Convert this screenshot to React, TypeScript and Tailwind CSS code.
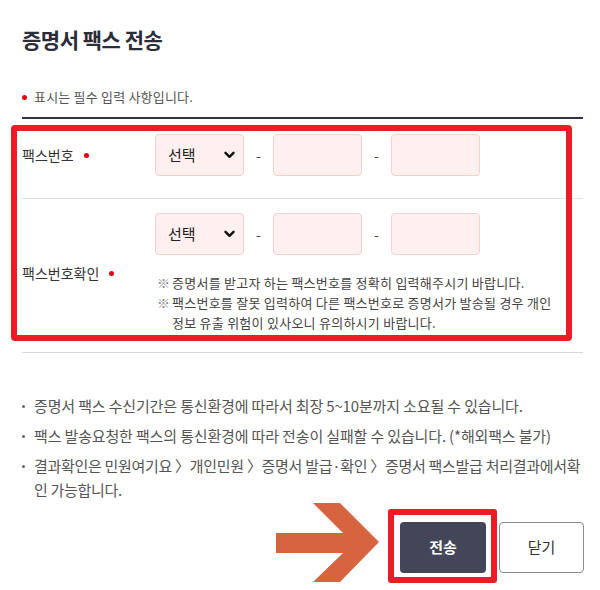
import React from "react";

function Chevron() {
  return (
    <svg width="11" height="8" viewBox="0 0 11 8" className="shrink-0">
      <path d="M1.5 1.8 L5.5 5.8 L9.5 1.8" fill="none" stroke="#111" strokeWidth="2.4" strokeLinecap="round" strokeLinejoin="round" />
    </svg>
  );
}

function SelectBox() {
  return (
    <div className="w-[89px] h-[42px] rounded-[4px] border border-[#f8cfcf] bg-[#fff0f0] flex items-center justify-between pl-[12px] pr-[8px]">
      <span className="text-[15px] text-[#222]">선택</span>
      <Chevron />
    </div>
  );
}

function InputBox() {
  return <div className="w-[89px] h-[42px] rounded-[4px] border border-[#f8cfcf] bg-[#fff0f0]" />;
}

function Dash() {
  return <div className="w-[29px] text-center text-[14px] text-[#444]">-</div>;
}

function PhoneRow() {
  return (
    <div className="flex items-center">
      <SelectBox />
      <Dash />
      <InputBox />
      <Dash />
      <InputBox />
    </div>
  );
}

function RedDot() {
  return <span className="inline-block w-[5px] h-[5px] rounded-full bg-[#e60012]" />;
}

function Bullet() {
  return (
    <span className="w-[12px] shrink-0 flex pt-[11px]">
      <span className="w-[3px] h-[3px] rounded-full bg-[#666]" />
    </span>
  );
}

export default function App() {
  return (
    <div className="relative w-[600px] h-[590px] bg-white overflow-hidden font-['Noto_Sans_CJK_KR','Noto_Sans',sans-serif] text-[#333]">
      <div className="ml-[22px] w-[561px]">
        <h1 className="pt-[23px] h-[55px] leading-[32px] text-[21px] font-bold text-[#2b2d38] tracking-[-0.5px]">
          증명서 팩스 전송
        </h1>
        <div className="mt-[32px] h-[20px] flex items-center text-[13px] leading-[20px] text-[#555] tracking-[0.2px]">
          <RedDot />
          <span className="ml-[7px]">표시는 필수 입력 사항입니다.</span>
        </div>
        <div className="mt-[10px] border-t-2 border-[#2f3346]">
          <div className="flex border-b border-[#e4e4e4] pt-[15px] pb-[22px]">
            <div className="w-[133px] flex items-center text-[14px] text-[#333]">
              <span>팩스번호</span>
              <span className="ml-[10px] flex"><RedDot /></span>
            </div>
            <PhoneRow />
          </div>
          <div className="flex border-b border-[#d9d9d9] pt-[14px] pb-[19px]">
            <div className="w-[133px] flex items-center text-[14px] text-[#333]">
              <span>팩스번호확인</span>
              <span className="ml-[10px] flex"><RedDot /></span>
            </div>
            <div className="flex flex-col">
              <PhoneRow />
              <div className="mt-[18px] text-[13px] leading-[20px] text-[#444] tracking-[0.25px]">
                <div className="flex">
                  <span className="w-[15px] shrink-0 ml-[2px] text-[#888]">※</span>
                  <span>증명서를 받고자 하는 팩스번호를 정확히 입력해주시기 바랍니다.</span>
                </div>
                <div className="flex">
                  <span className="w-[15px] shrink-0 ml-[2px] text-[#888]">※</span>
                  <span className="w-[390px]">팩스번호를 잘못 입력하여 다른 팩스번호로 증명서가 발송될 경우 개인 정보 유출 위험이 있사오니 유의하시기 바랍니다.</span>
                </div>
              </div>
            </div>
          </div>
        </div>
        <ul className="mt-[41px] flex flex-col gap-[6px] text-[15px] leading-[24px] text-[#555] tracking-[-0.15px]">
          <li className="flex">
            <Bullet />
            <span>증명서 팩스 수신기간은 통신환경에 따라서 최장 5~10분까지 소요될 수 있습니다.</span>
          </li>
          <li className="flex">
            <Bullet />
            <span>팩스 발송요청한 팩스의 통신환경에 따라 전송이 실패할 수 있습니다. (*해외팩스 불가)</span>
          </li>
          <li className="flex">
            <Bullet />
            <span className="whitespace-nowrap tracking-[-0.3px]">
              결과확인은 민원여기요 〉개인민원 〉증명서 발급·확인 〉증명서 팩스발급 처리결과에서확
              <br />
              인 가능합니다.
            </span>
          </li>
        </ul>
        <div className="mt-[20px] flex justify-end gap-[13px] mr-[-1px]">
          <button className="w-[86px] h-[51px] rounded-[4px] bg-[#434559] text-white text-[15px] font-bold">전송</button>
          <button className="w-[85px] h-[51px] rounded-[4px] border border-[#8a8a8a] bg-white text-[#333] text-[15px]">닫기</button>
        </div>
      </div>

      <div className="absolute left-[11px] top-[125px] w-[561px] h-[216px] border-[6px] border-[#ec1c24] rounded-[4px] pointer-events-none" />
      <div className="absolute left-[388px] top-[509px] w-[109px] h-[74px] border-[6px] border-[#ec1c24] rounded-[3px] pointer-events-none" />
      <svg className="absolute left-0 top-0 pointer-events-none" width="600" height="590">
        <polygon
          points="276,533 343,533 313,503 340,503 379,542 340,582 313,582 343,553 276,553"
          fill="#d8633f"
        />
      </svg>
    </div>
  );
}
